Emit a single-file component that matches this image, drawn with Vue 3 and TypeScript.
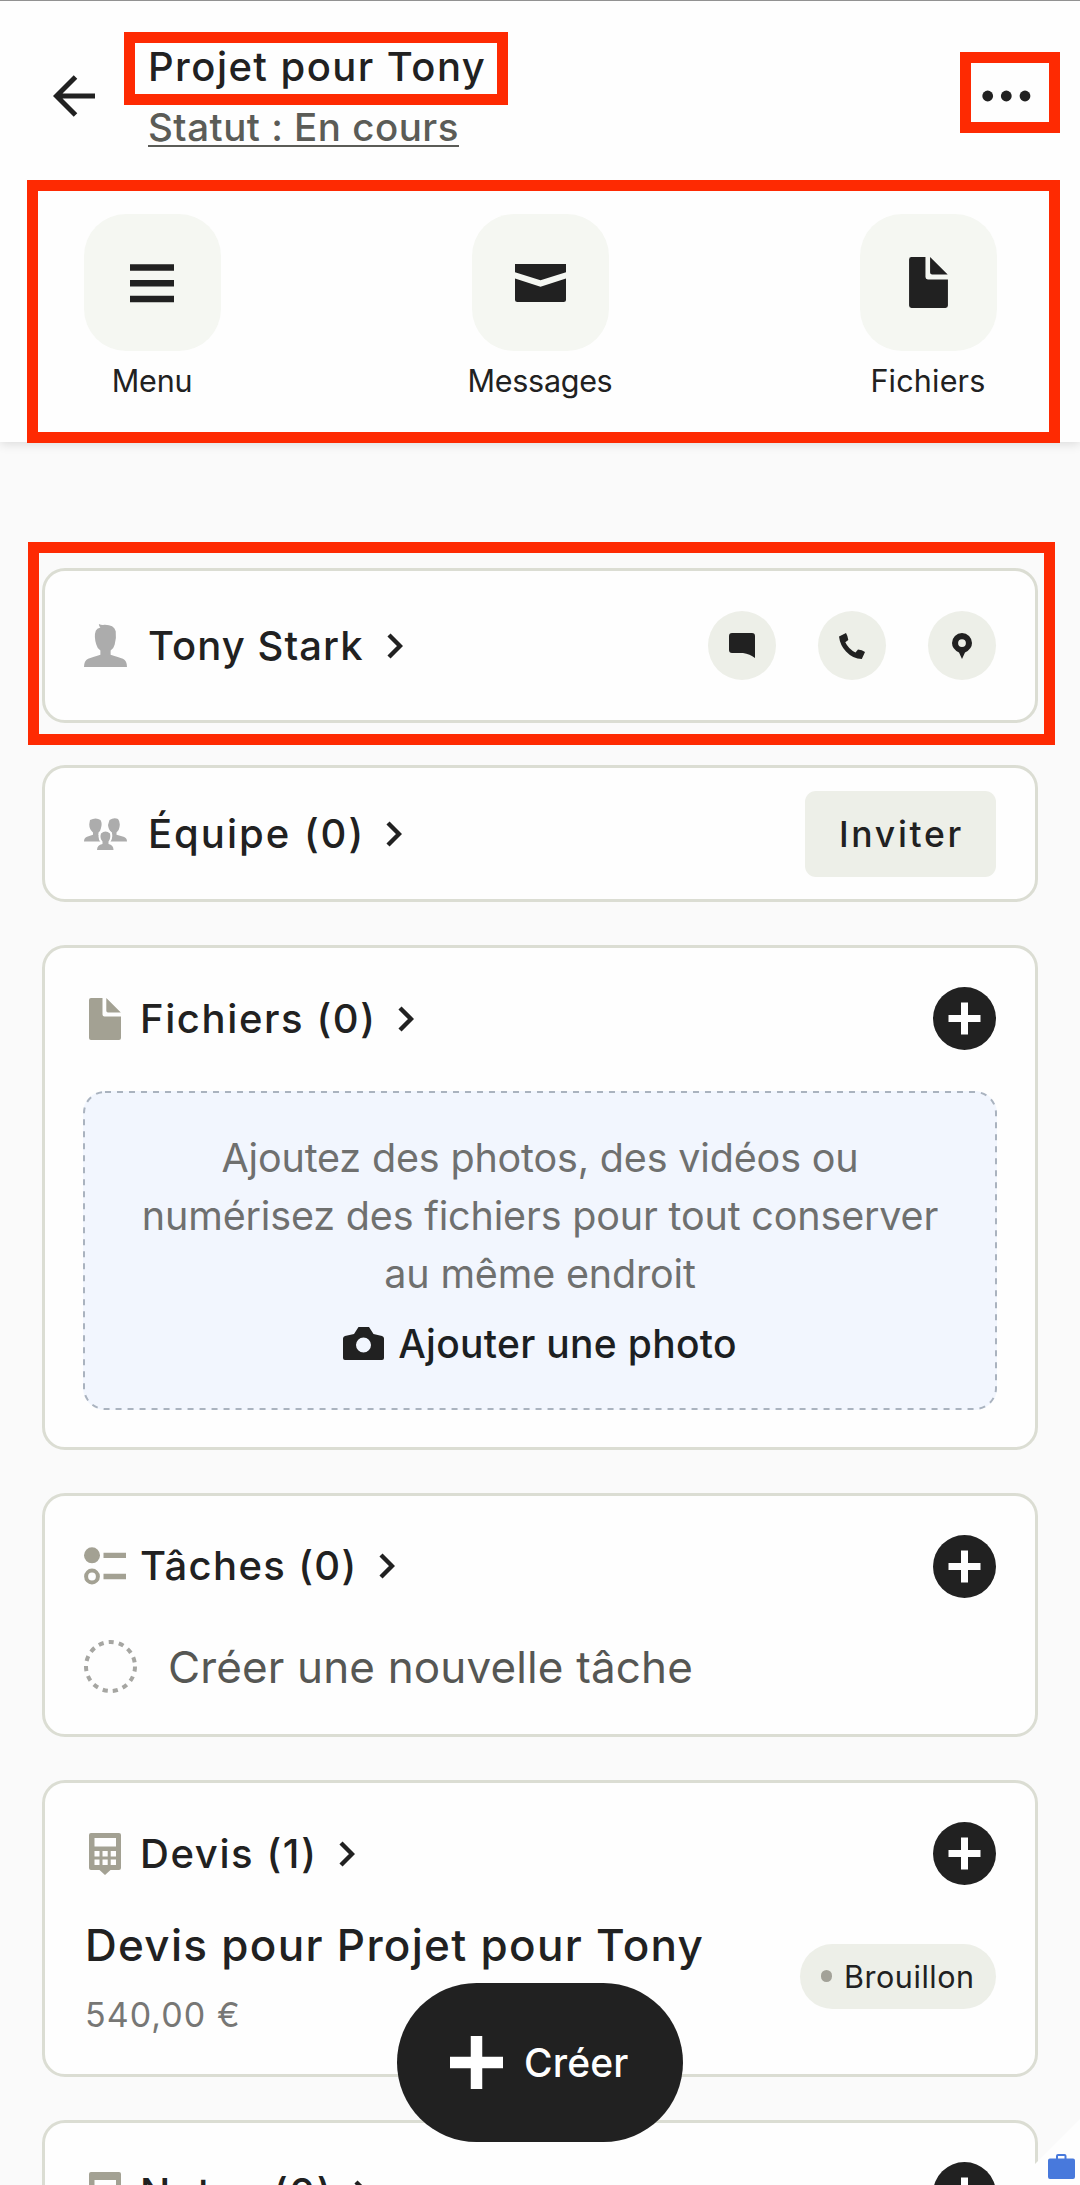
<script setup lang="ts">
interface Shortcut {
  id: 'menu' | 'messages' | 'files'
  label: string
  spacing: string
}

const shortcuts: Shortcut[] = [
  { id: 'menu', label: 'Menu', spacing: '-0.2px' },
  { id: 'messages', label: 'Messages', spacing: '-0.3px' },
  { id: 'files', label: 'Fichiers', spacing: '0.2px' },
]

const project = {
  title: 'Projet pour Tony',
  status: 'Statut : En cours',
  client: 'Tony Stark',
  quote: { title: 'Devis pour Projet pour Tony', amount: '540,00 €', state: 'Brouillon' },
}
</script>

<template>
  <div class="page">
    <header class="header">
      <div class="topbar">
        <svg class="back" width="42" height="42" viewBox="0 0 42 42">
          <path d="M42 21H3.5M22.5 2L3.5 21L22.5 40" />
        </svg>
        <div class="titles">
          <h1>{{ project.title }}</h1>
          <a class="status">{{ project.status }}</a>
        </div>
        <svg class="more" width="50" height="12" viewBox="0 0 50 12">
          <circle cx="6.7" cy="6" r="5.4" /><circle cx="25.3" cy="6" r="5.4" /><circle cx="44" cy="6" r="5.4" />
        </svg>
      </div>
      <nav class="shortcuts">
        <div v-for="s in shortcuts" :key="s.id" class="shortcut">
          <div class="tile">
            <svg v-if="s.id === 'menu'" width="46" height="40" viewBox="0 0 46 40">
              <path d="M1 1.2h44v6.5H1zM1 17h44v6.5H1zM1 32.8h44v6.5H1z" />
            </svg>
            <svg v-else-if="s.id === 'messages'" width="51" height="38" viewBox="0 0 51 38">
              <path d="M0 0H51V8.2L25.5 16.2L0 8.2ZM0 14.5L25.5 22.8L51 14.5V35.5Q51 38 48.5 38H2.5Q0 38 0 35.5Z" />
            </svg>
            <svg v-else width="39" height="51" viewBox="0 0 32 42">
              <path d="M2 0H13.5V16.5Q13.5 18.5 15.5 18.5H32V40Q32 42 30 42H2Q0 42 0 40V2Q0 0 2 0ZM17.3 0L31.8 14.4H19Q17.3 14.4 17.3 12.7Z" />
            </svg>
          </div>
          <span :style="{ letterSpacing: s.spacing }">{{ s.label }}</span>
        </div>
      </nav>
    </header>

    <main class="content">
      <section class="card client">
        <div class="heading">
          <svg class="grey" width="43" height="43" viewBox="0 0 42 42">
            <path d="M14.5 0Q17 1.2 20 .8Q29 .6 31 7Q31.8 13 30 20Q29 24 26 26V30Q34 32.5 38 34Q42 36 42 42H0Q0 36 4 34Q8 32.5 16 30V26Q13 24 12 20Q9.5 12 11.5 6.5Q12.5 4.5 16 3.5Q14.5 2 14.5 0Z" />
          </svg>
          <h2 class="ls-tony">{{ project.client }}</h2>
          <svg class="chevron" width="16" height="26" viewBox="0 0 16 26"><path d="M2 2L13 13L2 24" /></svg>
        </div>
        <div class="contacts">
          <span class="round">
            <svg width="26" height="25" viewBox="0 0 26 25"><path d="M3 0H23Q26 0 26 3V25Q21 21 14 20H3Q0 20 0 17V3Q0 0 3 0Z" /></svg>
          </span>
          <span class="round">
            <svg width="26" height="26" viewBox="0 0 26 26"><path d="M0 3.4L7 0Q8.8 3 9.3 7L6.3 9.3Q9.5 16 16.5 19.6L19 16.6Q23 17 26 19L22.8 26Q14 26 7 18.5Q1 12 0 3.4Z" /></svg>
          </span>
          <span class="round">
            <svg width="20" height="26" viewBox="0 0 20 26"><path fill-rule="evenodd" d="M10 0A10 10 0 0 1 20 10Q20 16 13 19.5L10 26L7 19.5Q0 16 0 10A10 10 0 0 1 10 0ZM10 6.2A3.9 3.9 0 1 0 10 14A3.9 3.9 0 1 0 10 6.2Z" /></svg>
          </span>
        </div>
      </section>

      <section class="card team">
        <div class="heading">
          <svg class="grey" width="43" height="32" viewBox="0 0 43 32">
            <path d="M6 2Q12 -1 16.5 2Q18.5 5 17 10Q16.500 13 14.500 14.500V17L17 18V23.500H0Q0 20 3 18.800L9 16.800V14.500Q5 11 5.300 6Z" />
            <path d="M25.500 2Q30 -1 34 1Q36.500 4 35.500 9Q35 13 32.500 14.500V16.800L39.500 18.800Q43 20 43 23.500H26V18L27.500 17V14.500Q24.500 12 24 7Z" />
            <path class="front" d="M17 15.500Q21.500 11.500 26 15.500Q27 20 24.500 23.500V26Q29.500 27 29.500 32H13Q13 27 18.500 26V23.500Q15.500 20 17 15.500Z" />
          </svg>
          <h2 class="ls-team">Équipe (0)</h2>
          <svg class="chevron" width="16" height="26" viewBox="0 0 16 26"><path d="M2 2L13 13L2 24" /></svg>
        </div>
        <button class="invite">Inviter</button>
      </section>

      <section class="card files">
        <div class="card-head">
          <div class="heading tight">
            <span class="icon-box">
              <svg class="olive" width="32" height="42" viewBox="0 0 32 42">
                <path d="M2 0H13.500V16.500Q13.500 18.500 15.500 18.500H32V40Q32 42 30 42H2Q0 42 0 40V2Q0 0 2 0ZM17.300 0L31.800 14.400H19Q17.300 14.400 17.300 12.700Z" />
              </svg>
            </span>
            <h2>Fichiers (0)</h2>
            <svg class="chevron" width="16" height="26" viewBox="0 0 16 26"><path d="M2 2L13 13L2 24" /></svg>
          </div>
          <svg class="plus" width="63" height="63" viewBox="0 0 63 63"><circle cx="31.500" cy="31.500" r="31.500" /><path d="M15.500 31.500h32M31.500 15.500v32" /></svg>
        </div>
        <div class="dropzone">
          <svg class="dashes" width="914" height="319" viewBox="0 0 914 319"><rect x="1" y="1" width="912" height="317" rx="21" /></svg>
          <p>Ajoutez des photos, des vidéos ou<br />numérisez des fichiers pour tout conserver<br />au même endroit</p>
          <div class="add-photo">
            <svg width="41" height="33" viewBox="0 0 41 33">
              <path fill-rule="evenodd" d="M15.500 0H26L30.500 7L39 9Q41 9.500 41 11.500V31Q41 33 39 33H2Q0 33 0 31V11.500Q0 9.500 2 9L11 7ZM20.500 10.500A7.500 7.500 0 1 0 20.500 25.500A7.500 7.500 0 1 0 20.500 10.500Z" />
            </svg>
            <span>Ajouter une photo</span>
          </div>
        </div>
      </section>

      <section class="card tasks">
        <div class="card-head">
          <div class="heading tight">
            <svg class="olive" width="42" height="38" viewBox="0 0 42 38">
              <circle cx="8" cy="8.300" r="8" />
              <circle cx="8" cy="29.500" r="5.900" fill="none" stroke="#a3a193" stroke-width="4" />
              <path d="M19.500 5.700H42V11H19.500ZM19.500 26.800H42V32.200H19.500Z" />
            </svg>
            <h2 class="ls-tasks">Tâches (0)</h2>
            <svg class="chevron" width="16" height="26" viewBox="0 0 16 26"><path d="M2 2L13 13L2 24" /></svg>
          </div>
          <svg class="plus" width="63" height="63" viewBox="0 0 63 63"><circle cx="31.500" cy="31.500" r="31.500" /><path d="M15.500 31.500h32M31.500 15.500v32" /></svg>
        </div>
        <div class="new-task">
          <svg width="53" height="53" viewBox="0 0 53 53"><circle cx="26.500" cy="26.500" r="24.500" /></svg>
          <span>Créer une nouvelle tâche</span>
        </div>
      </section>

      <section class="card quotes">
        <div class="card-head">
          <div class="heading tight">
            <span class="icon-box">
              <svg class="olive" width="32" height="42" viewBox="0 0 32 42">
                <path fill-rule="evenodd" d="M2 0H30Q32 0 32 2V35Q32 37 30 37H21.500L16 42L10.500 37H2Q0 37 0 35V2Q0 0 2 0ZM5.500 5V13.500H27V5ZM5.500 18V23.500H10.500V18ZM13.500 18V23.500H18.700V18ZM21.700 18V23.500H27V18ZM5.500 26.500V32H10.500V26.500ZM13.500 26.500V32H18.700V26.500ZM21.700 26.500V32H27V26.500Z" />
              </svg>
            </span>
            <h2>Devis (1)</h2>
            <svg class="chevron" width="16" height="26" viewBox="0 0 16 26"><path d="M2 2L13 13L2 24" /></svg>
          </div>
          <svg class="plus" width="63" height="63" viewBox="0 0 63 63"><circle cx="31.500" cy="31.500" r="31.500" /><path d="M15.500 31.500h32M31.500 15.500v32" /></svg>
        </div>
        <div class="quote">
          <div>
            <h3>{{ project.quote.title }}</h3>
            <p>{{ project.quote.amount }}</p>
          </div>
          <span class="badge"><i></i>{{ project.quote.state }}</span>
        </div>
      </section>

      <section class="card notes">
        <div class="card-head">
          <div class="heading tight">
            <span class="icon-box">
              <svg class="olive" width="32" height="42" viewBox="0 0 32 42">
                <path fill-rule="evenodd" d="M2 0H30Q32 0 32 2V42H0V2Q0 0 2 0ZM5.500 8V16H27V8Z" />
              </svg>
            </span>
            <h2>Notes (0)</h2>
            <svg class="chevron" width="16" height="26" viewBox="0 0 16 26"><path d="M2 2L13 13L2 24" /></svg>
          </div>
          <svg class="plus" width="63" height="63" viewBox="0 0 63 63"><circle cx="31.500" cy="31.500" r="31.500" /><path d="M15.500 31.500h32M31.500 15.500v32" /></svg>
        </div>
      </section>
    </main>

    <svg class="corner" width="66" height="66" viewBox="0 0 66 66">
      <path d="M66 0V66H0Z" fill="#fefefe" />
      <path fill="#4879dc" fill-rule="evenodd" d="M42 39.500V37Q42 35 44 35H50.500Q52.500 35 52.500 37V39.500H59Q61 39.500 61 41.500V58Q61 60 59 60H36Q34 60 34 58V41.500Q34 39.500 36 39.500ZM44 37V39.500H50.500V37Z" />
    </svg>

    <button class="fab">
      <svg width="53" height="53" viewBox="0 0 53 53"><path d="M0 26.500H53M26.500 0V53" /></svg>
      <span>Créer</span>
    </button>

    <div class="mark mark-title"></div>
    <div class="mark mark-more"></div>
    <div class="mark mark-nav"></div>
    <div class="mark mark-client"></div>
  </div>
</template>

<style>
body {
  margin: 0;
  background: #fafafa;
}
</style>

<style scoped>
.page {
  position: relative;
  width: 1080px;
  height: 2185px;
  overflow: hidden;
  background: #fafafa;
  color: #212121;
  font-family: Inter, 'Liberation Sans', sans-serif;
  white-space: nowrap;
  box-sizing: border-box;
}
.page *,
.page *::before {
  box-sizing: border-box;
}
h1,
h2,
h3,
p {
  margin: 0;
}
svg {
  display: block;
  flex: none;
  fill: #212121;
}
button {
  border: 0;
  font-family: inherit;
}

.header {
  position: relative;
  z-index: 1;
  height: 442px;
  background: #fefefe;
  border-top: 1px solid #929292;
  box-shadow: 0 2px 10px rgba(0, 0, 0, 0.13);
}
.topbar {
  display: flex;
  align-items: center;
  height: 189px;
  padding: 0 49px 0 53px;
}
.back {
  fill: none;
  stroke: #212121;
  stroke-width: 5;
}
.titles {
  display: flex;
  flex-direction: column;
  align-items: flex-start;
  flex: 1;
  padding: 2px 0 0 53px;
}
h1 {
  font-size: 40px;
  line-height: 61px;
  font-weight: 500;
  letter-spacing: 1.45px;
}
.status {
  font-size: 38.5px;
  line-height: 61px;
  font-weight: 500;
  letter-spacing: 0.5px;
  color: #5b5c57;
  text-decoration: underline;
  text-decoration-thickness: 2px;
  text-underline-offset: 4px;
  text-decoration-skip-ink: none;
}
.shortcuts {
  display: flex;
  justify-content: space-between;
  padding: 24px 84px 0;
}
.shortcut {
  display: flex;
  flex-direction: column;
  align-items: center;
  width: 136px;
  font-size: 30.5px;
  line-height: 40px;
}
.tile {
  display: flex;
  align-items: center;
  justify-content: center;
  width: 137px;
  height: 137px;
  margin-bottom: 10px;
  border-radius: 42px;
  background: #f5f7f2;
}

.content {
  display: flex;
  flex-direction: column;
  gap: 42.75px;
  padding: 126px 42px 0;
}
.card {
  flex: none;
  padding: 39px;
  border: 3px solid #dbddd3;
  border-radius: 23px;
  background: #fefefe;
}
.client,
.team {
  display: flex;
  align-items: center;
  justify-content: space-between;
}
.client {
  height: 154.5px;
}
.team {
  height: 137px;
  padding-top: 1px;
  padding-bottom: 0;
}
.files {
  height: 505px;
}
.tasks {
  height: 244.5px;
}
.quotes {
  height: 297px;
}
.notes {
  height: 244px;
}
.heading {
  display: flex;
  align-items: center;
}
h2 {
  margin: 0 21px 0 21px;
  font-size: 40px;
  line-height: 56px;
  font-weight: 500;
  letter-spacing: 1.6px;
}
.ls-tony {
  margin-right: 23px;
  letter-spacing: 1.05px;
}
.ls-team {
  letter-spacing: 2px;
}
.tight h2 {
  margin-left: 14px;
}
.tight .ls-tasks {
  letter-spacing: 1.35px;
}
.chevron {
  fill: none;
  stroke: #212121;
  stroke-width: 4.4;
}
.grey {
  fill: #acacac;
}
.front {
  stroke: #fefefe;
  stroke-width: 4;
  paint-order: stroke;
}
.olive {
  fill: #a3a193;
}
.icon-box {
  display: flex;
  justify-content: center;
  width: 42px;
}
.client .heading,
.client .contacts {
  padding-top: 1px;
}
.contacts {
  display: flex;
  gap: 42px;
}
.round {
  display: flex;
  align-items: center;
  justify-content: center;
  width: 68px;
  height: 69px;
  border-radius: 50%;
  background: #edefe8;
}
.invite {
  width: 191px;
  height: 86px;
  padding: 0 0 0 2px;
  border-radius: 11px;
  background: #edefe8;
  color: #212121;
  font-size: 35.5px;
  font-weight: 500;
  letter-spacing: 2.7px;
}
.card-head {
  display: flex;
  align-items: center;
  justify-content: space-between;
  height: 63px;
}
.plus path {
  stroke: #fff;
  stroke-width: 7;
}
.dropzone {
  position: relative;
  display: flex;
  flex-direction: column;
  align-items: center;
  width: 914px;
  height: 319px;
  margin: 41px 0 0 -1px;
  padding-top: 38px;
  border-radius: 22px;
  background: #f2f6fe;
}
.dashes {
  position: absolute;
  top: 0;
  left: 0;
}
.dashes rect {
  fill: none;
  stroke: #aab3bf;
  stroke-width: 2;
  stroke-dasharray: 6 6;
}
.dropzone p {
  font-size: 39.5px;
  line-height: 58px;
  letter-spacing: -0.17px;
  text-align: center;
  color: #6f706f;
}
.add-photo {
  display: flex;
  align-items: center;
  gap: 14px;
  height: 60px;
  margin-top: 10px;
  color: #1c1f22;
  font-size: 39px;
  font-weight: 500;
  letter-spacing: 0.3px;
}
.new-task {
  display: flex;
  align-items: center;
  gap: 31px;
  height: 53px;
  margin-top: 42px;
  font-size: 44px;
  line-height: 57px;
  letter-spacing: 0.14px;
  color: #565754;
}
.new-task svg {
  fill: none;
  stroke: #a6a6a2;
  stroke-width: 4;
  stroke-dasharray: 5.13 5.13;
}
.new-task span {
  padding-top: 3px;
}
.quote {
  display: flex;
  align-items: center;
  justify-content: space-between;
  margin-top: 27.500px;
}
h3 {
  margin-left: 1px;
  font-size: 44px;
  line-height: 64px;
  font-weight: 500;
  letter-spacing: 1.3px;
}
.quote p {
  margin: 13px 0 0 1px;
  font-size: 34px;
  line-height: 50px;
  letter-spacing: 1.05px;
  color: #777775;
}
.badge {
  display: flex;
  align-items: center;
  width: 196px;
  height: 65px;
  padding-left: 20.5px;
  border-radius: 33px;
  background: #edefe8;
  font-size: 30.5px;
  letter-spacing: 0.55px;
}
.badge i {
  width: 11.5px;
  height: 11.5px;
  margin-right: 12px;
  border-radius: 50%;
  background: #a3a298;
}

.corner {
  position: absolute;
  right: 0;
  bottom: 0;
}
.fab {
  position: absolute;
  left: 397px;
  top: 1983px;
  display: flex;
  align-items: center;
  gap: 21px;
  width: 286px;
  height: 159px;
  padding: 0 0 0 53px;
  border-radius: 80px;
  background: #212121;
  color: #fefefe;
  font-size: 39px;
  font-weight: 500;
  letter-spacing: 0.1px;
}
.fab svg path {
  stroke: #fff;
  stroke-width: 11.5;
}

/* Red callouts drawn over the interface */
.mark {
  position: absolute;
  z-index: 2;
  border: 11px solid #fe2a02;
}
.mark-title {
  left: 124px;
  top: 32px;
  width: 384px;
  height: 73px;
}
.mark-more {
  left: 960px;
  top: 52px;
  width: 100px;
  height: 81px;
}
.mark-nav {
  left: 27px;
  top: 180px;
  width: 1033px;
  height: 263px;
}
.mark-client {
  left: 28px;
  top: 541.5px;
  width: 1026.5px;
  height: 203.500px;
}
</style>
